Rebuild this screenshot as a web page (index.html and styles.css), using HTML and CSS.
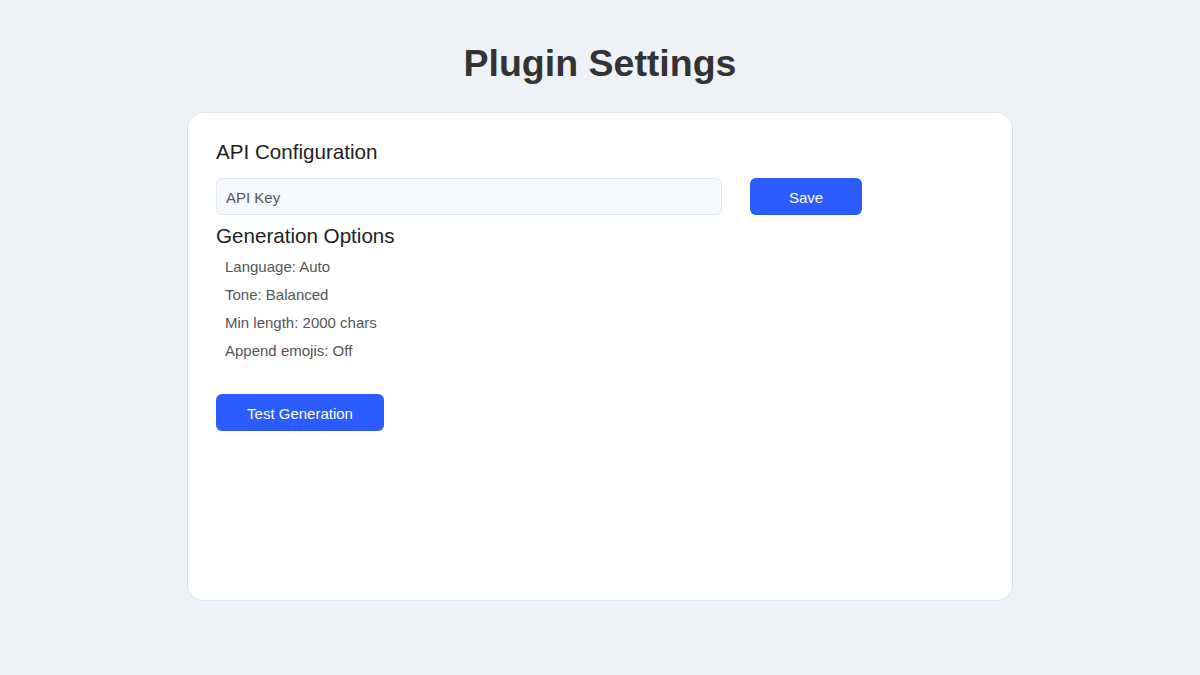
FILE: index.html
```html
<!DOCTYPE html>
<html>
<head>
<meta charset="utf-8">
<link rel="stylesheet" href="styles.css">
</head>
<body>
<h1 class="title">Plugin Settings</h1>
<div class="card">
  <h2 class="section">API Configuration</h2>
  <div class="row">
    <input class="input" type="text" placeholder="API Key">
    <button class="btn btn-save">Save</button>
  </div>
  <h2 class="section section-gen">Generation Options</h2>
  <ul class="options">
    <li>Language: Auto</li>
    <li>Tone: Balanced</li>
    <li>Min length: 2000 chars</li>
    <li>Append emojis: Off</li>
  </ul>
  <button class="btn btn-test">Test Generation</button>
</div>
</body>
</html>
```
FILE: styles.css
```css
html, body {
  margin: 0;
  padding: 0;
}
body {
  background: #eef2f6;
  font-family: "Liberation Sans", Arial, sans-serif;
  padding-top: 40px;
  height: 675px;
  box-sizing: border-box;
}
.title {
  margin: 0 0 26px;
  text-align: center;
  font-size: 37.5px;
  line-height: 46px;
  font-weight: bold;
  color: #333;
}
.card {
  width: 826px;
  height: 489px;
  box-sizing: border-box;
  margin: 0 auto;
  background: #fff;
  border: 1px solid #dce3ea;
  border-radius: 16px;
  padding: 27px 28px;
}
.section {
  margin: 0;
  font-size: 20.6px;
  line-height: 24px;
  font-weight: normal;
  color: #222;
}
.row {
  display: flex;
  gap: 28px;
  margin-top: 14px;
}
.input {
  width: 506px;
  height: 37px;
  box-sizing: border-box;
  background: #f5f8fc;
  border: 1px solid #e2e8f0;
  border-radius: 6px;
  padding: 2px 9px 0;
  font-family: "Liberation Sans", Arial, sans-serif;
  font-size: 15px;
  color: #555;
  outline: none;
}
.input::placeholder {
  color: #555;
}
.btn {
  height: 37px;
  box-sizing: border-box;
  background: #2b5cff;
  color: #fff;
  border: none;
  border-radius: 6px;
  font-family: "Liberation Sans", Arial, sans-serif;
  font-size: 15px;
  padding: 1px 0 0;
  cursor: pointer;
}
.btn-save {
  width: 112px;
}
.section-gen {
  margin-top: 9px;
}
.options {
  list-style: none;
  margin: 5px 0 0;
  padding: 0 0 0 9px;
}
.options li {
  font-size: 15px;
  line-height: 28px;
  color: #555;
}
.btn-test {
  width: 168px;
  margin-top: 29px;
}
```
